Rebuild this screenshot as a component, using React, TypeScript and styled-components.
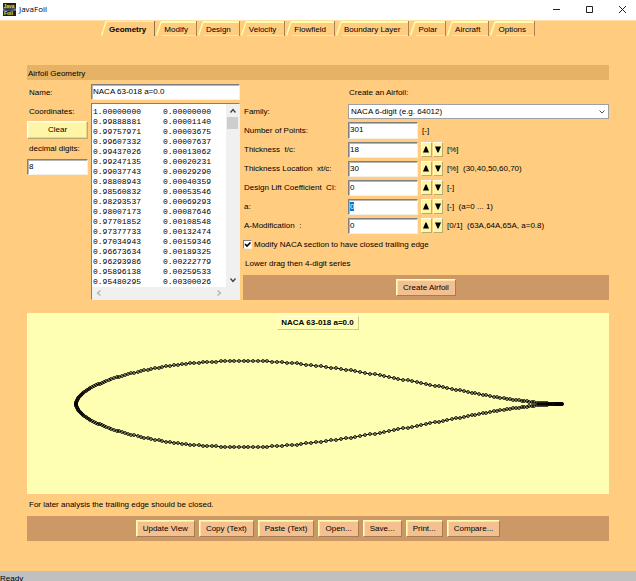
import React, { useEffect, useRef } from "react";
import styled, { createGlobalStyle } from "styled-components";

const GlobalStyle = createGlobalStyle`
  *, *::before, *::after { box-sizing: border-box; }
  body { margin: 0; background: #ffcc80; }
  body, button, input, select, textarea {
    font-family: "Liberation Sans", Arial, sans-serif;
    font-size: 8px;
    line-height: 10px;
    color: #000;
  }
`;

const Window = styled.div`
  display: flex;
  flex-direction: column;
  height: 100vh;
  overflow: hidden;
  background: #ffcc80;
`;

const TitleBar = styled.header`
  display: flex;
  align-items: center;
  gap: 3px;
  height: 20px;
  flex: none;
  padding: 0 9px 2px 3px;
  background: #fff;
`;

const AppTitle = styled.h1`
  flex: 1;
  margin: 0;
  font: 400 8px/12px "Open Sans", sans-serif;
`;

const WindowButtons = styled.div`
  display: flex;
  gap: 24px;
`;

const WindowButton = styled.button`
  display: flex;
  padding: 0;
  border: 0;
  background: none;
`;

const TabList = styled.nav`
  display: flex;
  flex: none;
  justify-content: center;
  gap: 1px;
  height: 16px;
  border-top: 1px solid #ffe0a8;
`;

const TabButton = styled.button<{ $active?: boolean }>`
  display: flex;
  align-items: stretch;
  height: 15px;
  padding: 0;
  border: 0;
  border-right: 1px solid ${(p) => (p.$active ? "#8f7248" : "#a88550")};
  background: none;
  font-weight: ${(p) => (p.$active ? 700 : 400)};
`;

const TabFace = styled.span<{ $active?: boolean }>`
  padding: ${(p) => (p.$active ? "3px 8px 0 2px" : "2px 8px 0 2px")};
  border-top: ${(p) => (p.$active ? "1px solid #ffe9b8" : "2px solid #ffffa6")};
  border-bottom: 1px solid ${(p) => (p.$active ? "transparent" : "#ffeb9c")};
`;

const Content = styled.main`
  flex: 1;
  padding: 29px 27px 0;
`;

const SectionHeader = styled.h2`
  margin: 0 0 3px;
  padding: 4px 1px 1px;
  background: #e5b266;
  font-size: 8px;
  font-weight: 400;
  line-height: 10px;
`;

const FormGrid = styled.div`
  display: grid;
  grid-template-columns: 61px 149px 1fr;
  column-gap: 3px;
  height: 217px;
  margin-bottom: 13px;
`;

const Column = styled.div`
  display: flex;
  flex-direction: column;
  min-width: 0;
`;

const Line = styled.label`
  display: flex;
  flex: none;
  align-items: center;
  height: 19px;
  padding-left: 2px;
  white-space: pre;
`;

const Bevel = styled.input`
  display: block;
  width: 100%;
  height: 16px;
  padding: 0 0 1px 1px;
  border: 1px solid;
  border-color: #808080 #f3eee6 #f3eee6 #808080;
  border-radius: 0;
  box-shadow: inset 1px 1px 0 #b4b4b4;
  background: #fff;
  outline: none;
  &::selection { background: #0078d7; color: #fff; }
`;

const TallBevel = styled(Bevel)`
  height: 17px;
  padding-bottom: 3px;
`;

const NameBevel = styled(Bevel)`
  flex: none;
  margin: 1px 0 3px;
`;

const DigitsBevel = styled(Bevel)`
  margin-top: 1px;
`;

const ClearButton = styled.button`
  flex: none;
  height: 18px;
  padding: 0;
  border: 1px solid;
  border-color: #fffff0 #b8ac70 #b8ac70 #fffff0;
  box-shadow: inset -1px -1px 0 #e0d68e, inset 1px 1px 0 #fffbd0;
  background: #fff5a6;
`;

const CoordinateBox = styled.div`
  display: grid;
  grid-template-columns: 1fr 13px;
  grid-template-rows: 1fr 12px;
  flex: 1;
  border: 1px solid;
  border-color: #808080 #f3eee6 #f3eee6 #808080;
  background: #f0f0f0;
`;

const Coordinates = styled.textarea`
  display: block;
  width: 100%;
  height: 100%;
  padding: 3px 0 0 1px;
  border: 0;
  outline: none;
  resize: none;
  overflow: hidden;
  background: #fff;
  font-family: "Liberation Mono", monospace;
  tab-size: 70px;
  white-space: pre;
`;

const Scroll = styled.div<{ $horizontal?: boolean }>`
  display: flex;
  flex-direction: ${(p) => (p.$horizontal ? "row" : "column")};
  align-items: center;
  justify-content: space-between;
  padding: ${(p) => (p.$horizontal ? "0 3px" : "3px 0")};
`;

const ThumbGroup = styled.div`
  display: flex;
  flex-direction: column;
  align-items: center;
  gap: 2px;
`;

const Thumb = styled.div`
  width: 11px;
  height: 12px;
  background: #cdcdcd;
`;

const Row = styled.div`
  display: grid;
  grid-template-columns: 102px 70px 22px 1fr;
  column-gap: 3px;
  align-items: center;
  flex: none;
  height: 19px;
`;

const RowLabel = styled.label`
  padding-left: 1px;
  white-space: pre;
`;

const Heading = styled.div`
  grid-column: 2 / -1;
  padding-left: 1px;
`;

const Dropdown = styled.div`
  display: grid;
  grid-column: 2 / -1;
  grid-template-columns: 1fr 10px;
  align-items: center;
`;

const Select = styled.select`
  grid-area: 1 / 1 / 2 / 3;
  height: 15px;
  padding: 0 2px;
  border: 1px solid #a0a0a0;
  border-radius: 0;
  outline: none;
  appearance: none;
  background: #fff;
`;

const Chevron = styled.svg`
  grid-area: 1 / 2;
  pointer-events: none;
`;

const Spinner = styled.div`
  display: grid;
  grid-template-columns: 1fr 1fr;
  gap: 1px;
`;

const StepButton = styled.button`
  display: flex;
  align-items: center;
  justify-content: center;
  height: 15px;
  padding: 0;
  border: 1px solid;
  border-color: #fffff0 #b8ac70 #b8ac70 #fffff0;
  background: #fff5a6;
`;

const Suffix = styled.span`
  padding-left: 1px;
  white-space: pre;
`;

const CheckLine = styled.label`
  display: flex;
  flex: none;
  align-items: center;
  gap: 2px;
  height: 19px;
`;

const CheckBox = styled.input`
  width: 9px;
  height: 9px;
  margin: 0;
  appearance: none;
  border: 1px solid;
  border-color: #808080 #f3eee6 #f3eee6 #808080;
  background: #fff;
`;

const CheckHolder = styled.span`
  display: grid;
  & > * { grid-area: 1 / 1; }
  svg { pointer-events: none; visibility: hidden; }
  input:checked + svg { visibility: visible; }
`;

const ActionBar = styled.div`
  display: flex;
  align-items: center;
  justify-content: center;
  gap: 4px;
  height: 25px;
  background: #cc9966;
`;

const FormActionBar = styled(ActionBar)`
  margin-top: auto;
`;

const ActionButton = styled.button`
  height: 17px;
  padding: 1px 6px 0;
  border: 1px solid;
  border-color: #ffffb3 #a67d53 #a67d53 #ffffb3;
  box-shadow: inset 1px 1px 0 #ffe3a8;
  background: #f5c08f;
  white-space: nowrap;
`;

const PlotPanel = styled.figure`
  display: flex;
  flex-direction: column;
  align-items: center;
  height: 181px;
  margin: 0;
  padding-top: 3px;
  background: #ffffb3;
`;

const PlotTitle = styled.figcaption`
  padding: 1px 4px 1px 3px;
  border: 1px solid;
  border-color: #ffffd8 #cccc8f #cccc8f #ffffd8;
  font-weight: 700;
`;

const Plot = styled.svg`
  display: block;
  width: 100%;
  flex: 1;
  min-height: 0;
`;

const Note = styled.p`
  margin: 0;
  padding: 6px 2px;
`;

const StatusBar = styled.footer`
  flex: none;
  height: 10px;
  padding-top: 3px;
  overflow: hidden;
  background: #c0c0c0;
`;

const TABS = ["Geometry", "Modify", "Design", "Velocity", "Flowfield", "Boundary Layer", "Polar", "Aircraft", "Options"];

const COORDINATES: [string, string][] = [
  ["1.00000000", "0.00000000"],
  ["0.99888881", "0.00001140"],
  ["0.99757971", "0.00003675"],
  ["0.99607332", "0.00007637"],
  ["0.99437026", "0.00013062"],
  ["0.99247135", "0.00020231"],
  ["0.99037743", "0.00029290"],
  ["0.98808943", "0.00040359"],
  ["0.98560832", "0.00053546"],
  ["0.98293537", "0.00069293"],
  ["0.98007173", "0.00087646"],
  ["0.97701852", "0.00108548"],
  ["0.97377733", "0.00132474"],
  ["0.97034943", "0.00159346"],
  ["0.96673634", "0.00189325"],
  ["0.96293986", "0.00222779"],
  ["0.95896138", "0.00259533"],
  ["0.95480295", "0.00300026"],
];

const PARAMETERS = [
  { id: "thickness", label: "Thickness  t/c:", value: "18", suffix: "[%]" },
  { id: "location", label: "Thickness Location  xt/c:", value: "30", suffix: "[%]  (30,40,50,60,70)" },
  { id: "lift", label: "Design Lift Coefficient  Cl:", value: "0", suffix: "[-]" },
  { id: "a", label: "a:", value: "0", suffix: "[-]  (a=0 ... 1)" },
  { id: "amod", label: "A-Modification  :", value: "0", suffix: "[0/1]  (63A,64A,65A, a=0.8)" },
];

const ACTIONS = ["Update View", "Copy (Text)", "Paste (Text)", "Open...", "Save...", "Print...", "Compare..."];

// Half thickness of the section, both values in percent of the chord.
const THICKNESS: [number, number][] = [
  [0, 0], [0.5, 1.404], [0.75, 1.713], [1.25, 2.217], [2.5, 3.104], [5, 4.362], [7.5, 5.308],
  [10, 6.068], [15, 7.225], [20, 8.048], [25, 8.6], [30, 8.913], [35, 9], [40, 8.845],
  [45, 8.482], [50, 7.942], [55, 7.256], [60, 6.455], [65, 5.567], [70, 4.622], [75, 3.65],
  [80, 2.691], [85, 1.787], [90, 0.985], [95, 0.348], [100, 0],
];

// Interpolates over the square root of x, where the nose is smooth.
function halfThickness(x: number): number {
  const i = Math.max(1, THICKNESS.findIndex(([tx]) => tx >= x));
  const [x0, y0] = THICKNESS[i - 1];
  const [x1, y1] = THICKNESS[i];
  const t = (Math.sqrt(x) - Math.sqrt(x0)) / (Math.sqrt(x1) - Math.sqrt(x0));
  return y0 + (y1 - y0) * t;
}

const CHORD = 486;
const NOSE_X = 49;
const AXIS_Y = 74;

function surface(side: 1 | -1): [number, number][] {
  const start = 0.11;
  const points: [number, number][] = [];
  for (let i = 0; i <= 150; i++) {
    const angle = start + ((Math.PI - start) * i) / 150;
    const x = Math.max(0, 1 - (Math.cos(start) - Math.cos(angle)) / (1 + Math.cos(start)));
    const y = halfThickness(Math.min(100, x * 100)) / 100;
    points.push([Math.round(NOSE_X + x * CHORD), AXIS_Y - side * Math.floor(y * CHORD)]);
  }
  return points;
}

const OUTLINE = [...surface(1), ...surface(-1).reverse()];

function Airfoil() {
  return (
    <Plot viewBox="0 0 582 164" role="img" aria-label="Airfoil section">
      <g fill="none" stroke="#000">
        <polyline points={OUTLINE.map((p) => p.join(",")).join(" ")} strokeWidth="0.9" />
        {OUTLINE.map(([x, y], i) => (
          <circle key={i} cx={x} cy={y} r="1.5" strokeWidth="0.8" />
        ))}
      </g>
    </Plot>
  );
}

function AppIcon() {
  return (
    <svg width="13" height="13" viewBox="0 0 13 13" aria-hidden="true">
      <rect width="13" height="13" fill="#22200c" />
      <path d="M0 5.5h13v2.5h-13z" fill="#6f7d9c" />
      <path d="M0 7.6C3 5 8 5.500 13 7.600z" fill="#26344f" />
      <g fill="#f0e05a" fontFamily="Liberation Sans" fontWeight="700" fontSize="5">
        <text x="0.500" y="4.600">Java</text>
        <text x="1" y="12.400">Foil</text>
      </g>
    </svg>
  );
}

function Arrow({ d, color = "#404040", size = 8 }: { d: string; color?: string; size?: number }) {
  return (
    <svg width={size} height={size} viewBox="0 0 8 8" fill="none" stroke={color} strokeWidth="1.3" aria-hidden="true">
      <path d={d} />
    </svg>
  );
}

function Triangle({ down }: { down?: boolean }) {
  return (
    <svg width="6" height="7" viewBox="0 0 6 7" aria-hidden="true">
      <path d={down ? "M0 0.500h6L3.500 6.500h-1z" : "M0 6.500h6L3.500 0.500h-1z"} fill="#000" />
    </svg>
  );
}

export default function App() {
  const activeField = useRef<HTMLInputElement>(null);

  useEffect(() => {
    activeField.current?.focus();
    activeField.current?.select();
  }, []);

  return (
    <>
      <GlobalStyle />
      <Window>
        <TitleBar>
          <AppIcon />
          <AppTitle>JavaFoil</AppTitle>
          <WindowButtons>
            <WindowButton aria-label="Minimize">
              <svg width="9" height="9" viewBox="0 0 9 9"><path d="M1 4.500h7" stroke="#222" /></svg>
            </WindowButton>
            <WindowButton aria-label="Maximize">
              <svg width="9" height="9" viewBox="0 0 9 9"><path d="M1.500 1.500h6v6h-6z" stroke="#222" fill="none" /></svg>
            </WindowButton>
            <WindowButton aria-label="Close">
              <svg width="9" height="9" viewBox="0 0 9 9"><path d="M1 1l7 7M8 1l-7 7" stroke="#222" /></svg>
            </WindowButton>
          </WindowButtons>
        </TitleBar>

        <TabList>
          {TABS.map((tab, i) => (
            <TabButton key={tab} $active={i === 0}>
              <svg width="6" height="15" viewBox="0 0 6 15" aria-hidden="true">
                <path d="M0.500 14.500L5 1h1" fill="none" stroke="#ffffa6" strokeWidth="1.500" />
              </svg>
              <TabFace $active={i === 0}>{tab}</TabFace>
            </TabButton>
          ))}
        </TabList>

        <Content>
          <SectionHeader>Airfoil Geometry</SectionHeader>
          <FormGrid>
            <Column>
              <Line htmlFor="name">Name:</Line>
              <Line htmlFor="coordinates">Coordinates:</Line>
              <ClearButton>Clear</ClearButton>
              <Line htmlFor="digits">decimal digits:</Line>
              <DigitsBevel id="digits" defaultValue="8" />
            </Column>

            <Column>
              <NameBevel id="name" defaultValue="NACA 63-018 a=0.0" />
              <CoordinateBox>
                <Coordinates id="coordinates" wrap="off" defaultValue={COORDINATES.map((c) => c.join("\t")).join("\n")} />
                <Scroll>
                  <ThumbGroup>
                    <Arrow d="M1.500 5.500L4 2.500L6.500 5.500" />
                    <Thumb />
                  </ThumbGroup>
                  <Arrow d="M1.500 2.500L4 5.500L6.500 2.500" />
                </Scroll>
                <Scroll $horizontal>
                  <Arrow d="M5.500 1.500L2.500 4L5.500 6.500" color="#b0b0b0" />
                  <Arrow d="M2.500 1.500L5.500 4L2.500 6.500" color="#b0b0b0" />
                </Scroll>
              </CoordinateBox>
            </Column>

            <Column>
              <Row>
                <Heading>Create an Airfoil:</Heading>
              </Row>
              <Row>
                <RowLabel htmlFor="family">Family:</RowLabel>
                <Dropdown>
                  <Select id="family">
                    <option>NACA 6-digit (e.g. 64012)</option>
                  </Select>
                  <Chevron width="6" height="6" viewBox="0 0 6 6">
                    <path d="M0.500 1.500L3 4L5.500 1.500" fill="none" stroke="#505050" />
                  </Chevron>
                </Dropdown>
              </Row>
              <Row>
                <RowLabel htmlFor="points">Number of Points:</RowLabel>
                <TallBevel id="points" defaultValue="301" />
                <Suffix>[-]</Suffix>
              </Row>
              {PARAMETERS.map((p) => (
                <Row key={p.id}>
                  <RowLabel htmlFor={p.id}>{p.label}</RowLabel>
                  <Bevel id={p.id} ref={p.id === "a" ? activeField : undefined} defaultValue={p.value} />
                  <Spinner>
                    <StepButton aria-label={`Increase ${p.label}`}><Triangle /></StepButton>
                    <StepButton aria-label={`Decrease ${p.label}`}><Triangle down /></StepButton>
                  </Spinner>
                  <Suffix>{p.suffix}</Suffix>
                </Row>
              ))}
              <CheckLine>
                <CheckHolder>
                  <CheckBox type="checkbox" defaultChecked />
                  <svg width="9" height="9" viewBox="0 0 9 9">
                    <path d="M2 4L4 6L7.500 2.500" fill="none" stroke="#000" strokeWidth="1.600" />
                  </svg>
                </CheckHolder>
                Modify NACA section to have closed trailing edge
              </CheckLine>
              <Line as="div">Lower drag then 4-digit series</Line>
              <FormActionBar>
                <ActionButton>Create Airfoil</ActionButton>
              </FormActionBar>
            </Column>
          </FormGrid>

          <PlotPanel>
            <PlotTitle>NACA 63-018 a=0.0</PlotTitle>
            <Airfoil />
          </PlotPanel>
          <Note>For later analysis the trailing edge should be closed.</Note>
          <ActionBar>
            {ACTIONS.map((action) => (
              <ActionButton key={action}>{action}</ActionButton>
            ))}
          </ActionBar>
        </Content>

        <StatusBar>Ready</StatusBar>
      </Window>
    </>
  );
}
